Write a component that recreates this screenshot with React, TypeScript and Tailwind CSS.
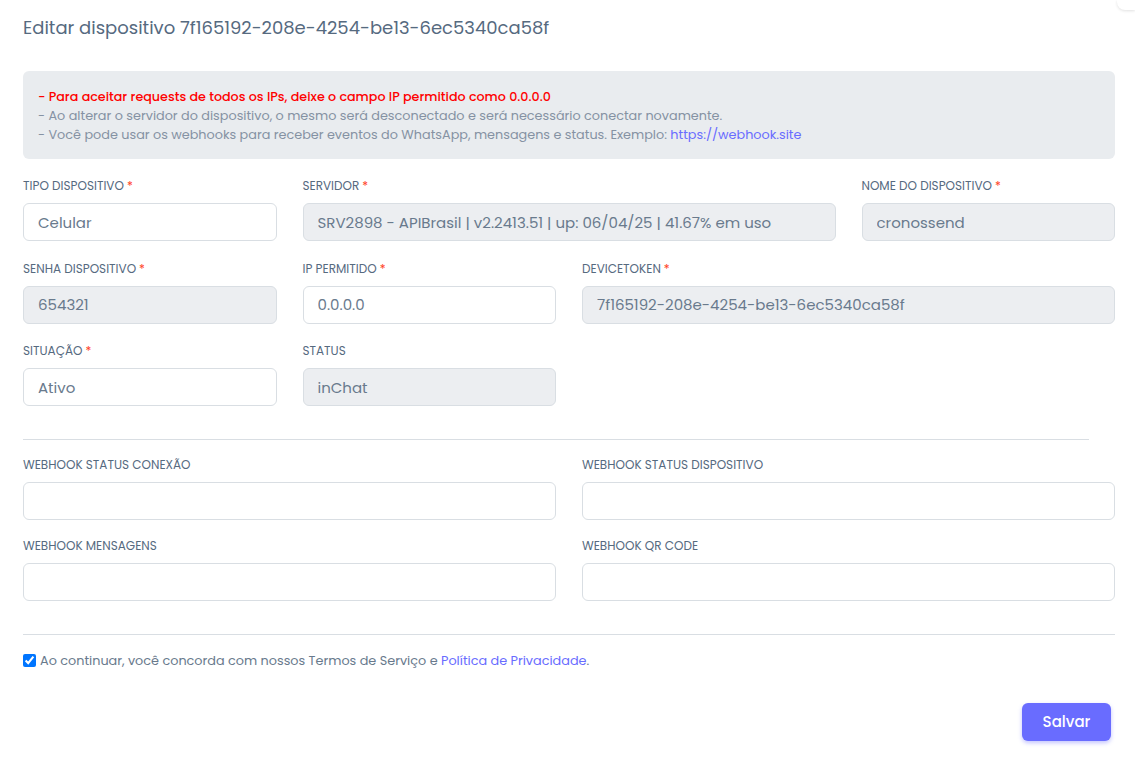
import React from "react";

const font = { fontFamily: "Poppins, 'Open Sans', 'Noto Sans', sans-serif" };

function Label({ text, required }: { text: string; required?: boolean }) {
  return (
    <label className="mb-[10px] block text-[12px] uppercase leading-[14px] text-[#566a7f]">
      {text}
      {required && <span className="ml-[3px] text-[#ff3e1d]">*</span>}
    </label>
  );
}

function Field({
  label,
  value = "",
  required,
  disabled,
  className = "",
}: {
  label: string;
  value?: string;
  required?: boolean;
  disabled?: boolean;
  className?: string;
}) {
  return (
    <div className={className}>
      <Label text={label} required={required} />
      <input
        readOnly
        value={value}
        className={`block h-[38px] w-full rounded-[6px] border border-[#d9dee3] px-[14px] text-[15px] text-[#697a8d] outline-none ${
          disabled ? "bg-[#eceef1]" : "bg-white"
        }`}
      />
    </div>
  );
}

export default function App() {
  return (
    <div className="relative min-h-[761px] bg-white pl-[23px] pr-[20px] pt-[16px]" style={font}>
      <div className="absolute right-0 top-0 h-[10px] w-[18px] rounded-bl-[8px] shadow-[0_1px_3px_rgba(0,0,0,0.12)]" />
      <h1 className="text-[18px] leading-[24px] text-[#566a7f]">
        Editar dispositivo 7f165192-208e-4254-be13-6ec5340ca58f
      </h1>

      <div className="mt-[31px] rounded-[6px] bg-[#e9ecef] px-[15px] pb-[15px] pt-[16px] text-[12.8px] leading-[19px] text-[#8592a3]">
        <p className="text-[12.7px] font-medium text-[#ff0000]">
          - Para aceitar requests de todos os IPs, deixe o campo IP permitido como 0.0.0.0
        </p>
        <p>- Ao alterar o servidor do dispositivo, o mesmo será desconectado e será necessário conectar novamente.</p>
        <p>
          - Você pode usar os webhooks para receber eventos do WhatsApp, mensagens e status. Exemplo:{" "}
          <a className="text-[#696cff]">https://webhook.site</a>
        </p>
      </div>

      <div className="mt-[20px] grid grid-cols-4 gap-x-[26px] gap-y-[20.5px]">
        <Field label="Tipo dispositivo" required value="Celular" />
        <Field
          label="Servidor"
          required
          disabled
          className="col-span-2"
          value="SRV2898 - APIBrasil | v2.2413.51 | up: 06/04/25 | 41.67% em uso"
        />
        <Field label="Nome do dispositivo" required disabled value="cronossend" />

        <Field label="Senha dispositivo" required disabled value="654321" />
        <Field label="IP permitido" required value="0.0.0.0" />
        <Field
          label="Devicetoken"
          required
          disabled
          className="col-span-2"
          value="7f165192-208e-4254-be13-6ec5340ca58f"
        />

        <Field label="Situação" required value="Ativo" />
        <Field label="Status" disabled value="inChat" />
      </div>

      <hr className="mt-[33px] w-[1066px] border-t border-[#d9dee3]" />

      <div className="mt-[18px] grid grid-cols-2 gap-x-[26px] gap-y-[19px]">
        <Field label="Webhook status conexão" />
        <Field label="Webhook status dispositivo" />
        <Field label="Webhook mensagens" />
        <Field label="Webhook QR Code" />
      </div>

      <hr className="mt-[33px] border-t border-[#d9dee3]" />

      <div className="mt-[16px] flex items-center gap-[4px] text-[12.8px] text-[#697a8d]">
        <input type="checkbox" defaultChecked className="m-0 h-[13px] w-[13px]" />
        <span>
          Ao continuar, você concorda com nossos Termos de Serviço e{" "}
          <a className="text-[#696cff]">Política de Privacidade</a>.
        </span>
      </div>

      <div className="mt-[33px] flex justify-end pr-[4px]">
        <button className="h-[38px] w-[89px] rounded-[6px] bg-[#696cff] text-[15px] font-medium text-white shadow-[0_2px_4px_rgba(105,108,255,0.4)]">
          Salvar
        </button>
      </div>
    </div>
  );
}
